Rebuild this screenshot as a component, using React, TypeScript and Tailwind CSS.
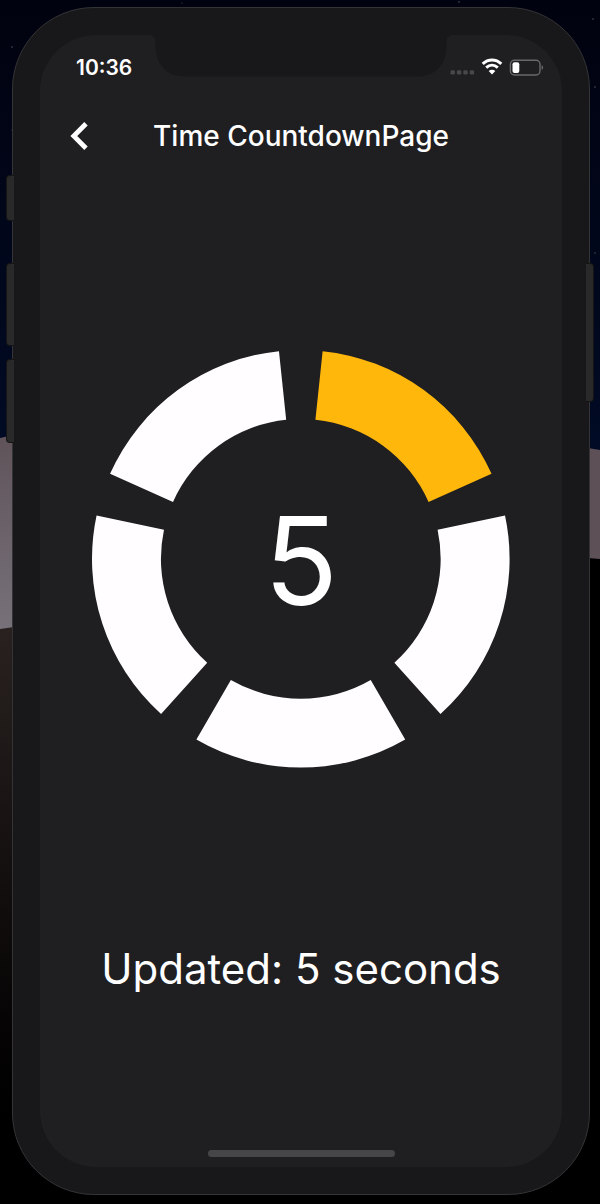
const TOTAL = 5;
const ACTIVE = 0;
const CENTER = 209;
const OUTER = 209;
const INNER = 140;

function point(radius: number, degrees: number) {
  const a = (degrees * Math.PI) / 180;
  return `${(CENTER + radius * Math.sin(a)).toFixed(2)} ${(CENTER - radius * Math.cos(a)).toFixed(2)}`;
}

function segmentPath(index: number) {
  const step = 360 / TOTAL;
  const from = index * step + 6;
  const to = from + step - 12;
  return `M${point(OUTER, from)} A${OUTER} ${OUTER} 0 0 1 ${point(OUTER, to)} L${point(INNER, to)} A${INNER} ${INNER} 0 0 0 ${point(INNER, from)} Z`;
}

function Wallpaper() {
  return (
    <svg
      className="absolute inset-0 h-full w-full"
      viewBox="0 0 600 1204"
      preserveAspectRatio="none"
      aria-hidden="true"
    >
      <defs>
        <linearGradient id="sky" x1="0" y1="0" x2="0" y2="1">
          <stop offset="0" stopColor="#01020f" />
          <stop offset="1" stopColor="#010b25" />
        </linearGradient>
        <linearGradient id="rock" x1="0" y1="0" x2="0" y2="1">
          <stop offset="0" stopColor="#5f5359" />
          <stop offset="1" stopColor="#77717a" />
        </linearGradient>
        <linearGradient id="ground" x1="0" y1="0" x2="0" y2="1">
          <stop offset="0" stopColor="#282120" />
          <stop offset="0.35" stopColor="#1a1514" />
          <stop offset="0.8" stopColor="#060404" />
          <stop offset="1" stopColor="#000000" />
        </linearGradient>
      </defs>
      <rect width="600" height="1204" fill="#000000" />
      <rect width="600" height="460" fill="url(#sky)" />
      <path d="M0 438L14 435V628L0 630Z" fill="url(#rock)" />
      <path d="M0 629L14 627V1120H0Z" fill="url(#ground)" />
      <path d="M588 448L600 450V559L588 558Z" fill="#5d5057" />
      <g fill="#4b5060">
        <circle cx="12" cy="47" r="0.8" />
        <circle cx="12" cy="130" r="0.6" />
        <circle cx="182" cy="3" r="0.6" />
        <circle cx="459" cy="2" r="0.8" />
        <circle cx="593" cy="19" r="0.8" />
        <circle cx="595" cy="87" r="0.8" />
        <circle cx="595" cy="253" r="0.7" />
      </g>
    </svg>
  );
}

function SideButtons() {
  return (
    <>
      <span className="absolute -left-[7px] top-[167px] h-[46px] w-[8px] rounded-l-sm border border-r-0 border-[#151515] bg-[#292929]" />
      <span className="absolute -left-[7px] top-[255px] h-[83px] w-[8px] rounded-l-sm border border-r-0 border-[#151515] bg-[#292929]" />
      <span className="absolute -left-[7px] top-[351px] h-[84px] w-[8px] rounded-l-sm border border-r-0 border-[#151515] bg-[#292929]" />
      <span className="absolute -right-[5px] top-[255px] h-[139px] w-[8px] rounded-r-sm border border-l-0 border-[#151515] bg-[#292929]" />
    </>
  );
}

function Notch() {
  return (
    <svg
      className="absolute left-1/2 top-0 h-[42px] w-[304px] -translate-x-1/2"
      viewBox="0 0 304 42"
      aria-hidden="true"
    >
      <path
        d="M0 0C4 0 6.500 2 6.500 7V10C6.500 30 18 41.500 36 41.500H268C286 41.500 297.500 30 297.500 10V7C297.500 2 300 0 304 0Z"
        fill="#18171a"
      />
    </svg>
  );
}

function StatusBar() {
  return (
    <div className="flex h-16 items-center justify-between pl-9 pr-[18px] pt-px">
      <time className="text-[21px] font-semibold leading-6">10:36</time>
      <svg className="h-6 w-[94px]" viewBox="0 0 94 24" aria-label="Wi-Fi on, battery low" role="img">
        <g fill="#48474a">
          <rect x="0.500" y="14.200" width="4.400" height="4.400" rx="1.400" />
          <rect x="6.900" y="14.200" width="4.400" height="4.400" rx="1.400" />
          <rect x="13.300" y="14.200" width="4.400" height="4.400" rx="1.400" />
          <rect x="19.700" y="14.200" width="4.400" height="4.400" rx="1.400" />
        </g>
        <g fill="none" stroke="#ffffff" strokeWidth="3">
          <path d="M32.700 7.800C38.200 2.600 45.800 2.600 51.300 7.800" />
          <path d="M36.200 11.700C39.700 8.500 44.300 8.500 47.800 11.700" />
        </g>
        <path d="M38.700 15C40.600 13.400 43.400 13.400 45.300 15L42 18.600Z" fill="#ffffff" />
        <rect x="60.400" y="4.200" width="29.600" height="14.800" rx="4" fill="none" stroke="#69686b" strokeWidth="1.400" />
        <rect x="62.500" y="6.300" width="6.800" height="10.800" rx="2" fill="#ffffff" />
        <path d="M91.600 9.300C93.600 10 93.600 13.200 91.600 14Z" fill="#69686b" />
      </svg>
    </div>
  );
}

function Header() {
  return (
    <header className="grid h-[72px] grid-cols-[52px_1fr_52px] items-center px-3 pt-px">
      <button type="button" aria-label="Back" className="flex h-12 w-[52px] items-center justify-center">
        <svg className="h-8 w-6" viewBox="0 0 24 32" fill="none" stroke="#ffffff" strokeWidth="4.800">
          <path d="M20 3.800L7.800 16L20 28.200" />
        </svg>
      </button>
      <h1 className="whitespace-nowrap text-center text-[28px] font-medium leading-9">
        Time CountdownPage
      </h1>
    </header>
  );
}

function Countdown({ value }: { value: number }) {
  return (
    <div className="grid w-4/5 place-items-center">
      <svg className="col-start-1 row-start-1 w-full" viewBox="0 0 418 418" aria-hidden="true">
        {Array.from({ length: TOTAL }, (_, i) => (
          <path key={i} d={segmentPath(i)} fill={i === ACTIVE ? "#ffb70b" : "#fffdff"} />
        ))}
      </svg>
      <span className="col-start-1 row-start-1 pt-1 text-[122px] font-normal leading-none">{value}</span>
    </div>
  );
}

export default function App() {
  return (
    <div className="relative flex min-h-screen bg-black pb-[9px] pl-3 pr-[10px] pt-[7px] font-['Inter','Liberation_Sans',sans-serif] text-white">
      <Wallpaper />
      <div className="relative flex w-full flex-1 rounded-[82px] border border-[#343436] bg-[#18171a] px-[27px] py-[27px]">
        <SideButtons />
        <div className="relative flex flex-1 flex-col rounded-[56px] bg-[#1f1e21]">
          <Notch />
          <StatusBar />
          <Header />
          <main className="flex flex-1 flex-col items-center gap-[173px] pt-[179px]">
            <Countdown value={5} />
            <p className="whitespace-nowrap text-[42px] leading-[56px]">Updated: 5 seconds</p>
          </main>
          <div className="mb-[10px] h-[7px] w-[187px] self-center rounded-full bg-[#464548]" />
        </div>
      </div>
    </div>
  );
}
